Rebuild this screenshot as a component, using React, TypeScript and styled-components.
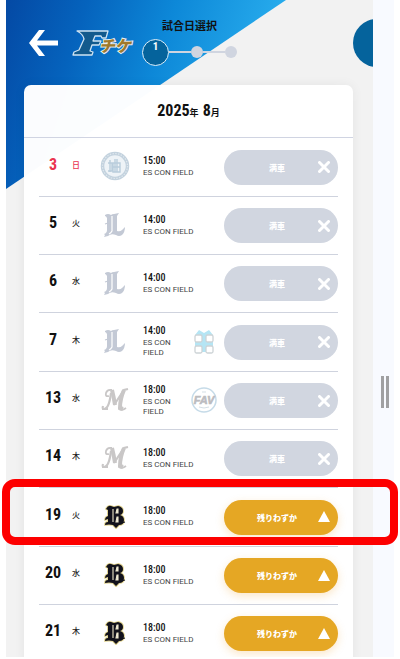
import React from 'react';
import styled, { createGlobalStyle, css } from 'styled-components';

const display = `"Roboto Condensed", "Roboto", "Noto Sans CJK JP", sans-serif`;
const sans = `"Roboto", "Noto Sans CJK JP", sans-serif`;

const GlobalStyle = createGlobalStyle`
  *, *::before, *::after { box-sizing: border-box; }
  body { margin: 0; background: #fff; color: #111; font-family: ${sans}; }
  button { font: inherit; border: 0; padding: 0; background: none; cursor: pointer; }
  ul, h1, h2, p, ol { margin: 0; padding: 0; list-style: none; }
`;

const Shell = styled.div`
  display: flex;
  height: calc(100vh - 2px);
  padding: 0 6px;
  overflow: hidden;
`;

const Screen = styled.div`
  position: relative;
  z-index: 1;
  flex: 1;
  min-width: 0;
  background: #f2f2f2;

  &::before {
    content: '';
    position: absolute;
    inset: 0 auto auto 0;
    width: 280px;
    height: 189px;
    background: linear-gradient(108deg, #0449a4 0%, #0563bd 24%, #0d88d8 50%, #2cb2f0 88%);
    clip-path: polygon(0 0, 100% 0, 0 100%);
  }
`;

const SideRail = styled.div`
  display: flex;
  align-items: center;
  justify-content: center;
  width: 21px;
  padding: 127px 0 0 2px;
  background: #f8faff;
`;

const Grip = styled.div`
  width: 8px;
  height: 32px;
  border: solid #a0a0a2;
  border-width: 0 3px;
`;

const Header = styled.header`
  position: relative;
  display: flex;
  align-items: center;
  height: 85px;
  padding-left: 23px;
  overflow: hidden;
`;

const BackButton = styled.button`
  display: flex;
  width: 29px;
  margin-right: 14px;
`;

const Progress = styled.div`
  display: flex;
  flex-direction: column;
  align-items: center;
  gap: 5px;
  margin-left: 5px;
`;

const StepTitle = styled.h1`
  font-size: 11px;
  line-height: 14px;
  font-weight: 700;
`;

const Steps = styled.ol`
  display: flex;
  align-items: center;
`;

const Step = styled.li<{ $current?: boolean }>`
  display: flex;
  align-items: center;
  justify-content: center;
  width: 12px;
  height: 12px;
  border-radius: 50%;
  background: #d0d5e0;

  ${({ $current }) =>
    $current &&
    css`
      width: 27px;
      height: 27px;
      padding-bottom: 10px;
      border: 1px solid #dceefa;
      background: #05639c;
      color: #fff;
      font: 700 11px/14px ${display};
    `}
`;

const StepLine = styled.li`
  width: 22px;
  height: 2px;
  background: #d0d5e0;
`;

const MenuButton = styled.button`
  flex: none;
  width: 48px;
  height: 48px;
  margin: 0 -28px 0 auto;

  && {
    border-radius: 50%;
    background: #05639c;
  }
`;

const Card = styled.main`
  position: relative;
  margin: 0 20px 0 18px;
  border-radius: 7px 7px 0 0;
  background: rgba(255, 255, 255, 0.985);
  box-shadow: 0 0 12px rgba(0, 0, 0, 0.06);
`;

const Month = styled.h2`
  display: flex;
  align-items: baseline;
  justify-content: center;
  height: 53px;
  padding-top: 14px;
  border-bottom: 1px solid #d0d4e2;
  font: 700 16px/24px ${display};
`;

const MonthUnit = styled.span`
  font-size: 9px;

  &:first-of-type { margin-right: 4px; }
`;

const GameList = styled.ul`
  padding: 0 15px;
`;

const Game = styled.li`
  position: relative;
  display: grid;
  grid-template-columns: 28px 18px 58px 1fr 114px;
  align-items: center;
  height: 58px;
  border-bottom: 1px solid #cfd3de;

  &:nth-child(3n + 1) { height: 59px; }
`;

const Day = styled.span<{ $sunday: boolean }>`
  font: 700 16px/20px ${display};
  text-align: center;
  padding-bottom: 5px;
  color: ${({ $sunday }) => ($sunday ? '#ea3350' : '#111')};
`;

const Weekday = styled.span<{ $sunday: boolean }>`
  font-size: 8px;
  line-height: 12px;
  font-weight: 500;
  text-align: center;
  padding-bottom: 3px;
  color: ${({ $sunday }) => ($sunday ? '#ea3350' : '#222')};
`;

const Emblem = styled.span`
  display: flex;
  justify-content: center;
  padding: 0 0 2px 2px;
`;

const Info = styled.div`
  display: flex;
  align-items: center;
  padding: 0 7px 2px 0;
`;

const Place = styled.p`
  flex: 1;
  font-size: 8px;
  line-height: 10px;
  color: #444;
`;

const Time = styled.time`
  display: block;
  font: 500 10px/14px ${display};
  color: #111;
`;

const Status = styled.button<{ $low: boolean }>`
  && {
    display: flex;
    align-items: center;
    height: 35px;
    padding: 0 8px 0 12px;
    border-radius: 18px;
    background: ${({ $low }) => ($low ? '#e5a724' : '#d1d6e0')};
    box-shadow: ${({ $low }) => ($low ? '0 3px 8px rgba(240, 160, 40, 0.25)' : 'none')};
    color: #fff;
    font-size: 8px;
    font-weight: 900;
  }
`;

const StatusLabel = styled.span`
  flex: 1;
  text-align: center;
`;

const Highlight = styled.span`
  position: absolute;
  inset: -9px -60px 1px -37px;
  border: 8px solid #fd0000;
  border-radius: 13px;
  pointer-events: none;
  z-index: 2;
`;

const ArrowLeft = () => (
  <svg width="29" height="28" viewBox="0 0 29 28" aria-hidden="true">
    <path d="M10 1h6L8 11.500h21v5H8L16 27h-6L0 14z" fill="#fff" />
  </svg>
);

const Logo = () => (
  <svg width="65" height="28" viewBox="0 0 65 28" role="img" aria-label="Fチケ">
    <path
      d="M5 2h31l-2 7h-4l-1-2h-6l-2 5h8l-2 4h-7l-2 6 3 1-1 3H1l1-3 5-2 5-11q-1-5-7-8z"
      fill="#135a8d"
      stroke="#cfe3f2"
      strokeWidth="1.300"
      strokeLinejoin="round"
    />
    <g transform="skewX(-12)">
      <text
        x="32"
        y="23"
        fontFamily="Noto Sans CJK JP, sans-serif"
        fontSize="16"
        fontWeight="900"
        fill="#a07a2c"
        stroke="#e9eef0"
        strokeWidth="2"
        paintOrder="stroke"
      >
        チケ
      </text>
    </g>
  </svg>
);

const SealMark = () => (
  <svg width="30" height="30" viewBox="0 0 30 30" aria-hidden="true">
    <circle cx="15" cy="15" r="12.500" fill="#eef3f7" stroke="#c3d2de" strokeWidth="3.500" />
    <circle cx="15" cy="15" r="12.500" fill="none" stroke="#e0e8ee" strokeWidth="1.200" strokeDasharray="1.4 1.4" />
    <path
      d="M10 9v12M8 12h4v8H8M15 8v13M13 12h7v9h-7zM13 16h7M17 8v13"
      fill="none"
      stroke="#b9cddc"
      strokeWidth="1.400"
    />
  </svg>
);

const LMark = () => (
  <svg width="22" height="26" viewBox="0 0 22 26" aria-hidden="true">
    <path
      d="M1 3q3-2 6 0 1-1 3-1l5-1-2 3v15q3 1 5-1l3-3q0 5-3 8-3 2-6 0-5-2-8 1l-4 1 1-2-1-1q3-1 3-4V6q-1-2-2-2z"
      fill="#c3c9d5"
    />
    <path d="M8 4v15q-1 2-3 3" stroke="#fff" strokeWidth="1.200" fill="none" />
    <path d="M1 12l3-1" stroke="#c3c9d5" strokeWidth="1.200" />
  </svg>
);

const MMark = () => (
  <svg width="28" height="26" viewBox="0 0 28 26" fill="none" stroke="#c9c7c7" aria-hidden="true">
    <path d="M11 3q2 8 3 15M23 3q-4 9-4 18l3 1" strokeWidth="4" />
    <path d="M10 6Q8 22 3 22q-2 0-1-3M13 18 23 3l4-1" strokeWidth="2.200" />
    <path d="M11 3q-5-1-6 3t3 3M1 22h6M18 22q3 2 7-1" strokeWidth="1.800" />
  </svg>
);

const BMark = () => (
  <svg width="22" height="25" viewBox="0 0 22 25" aria-hidden="true">
    <path
      d="M2 5q2-4 5-3l3 1 4-1q5 1 5 5 0 3-3 4 4 1 4 5 0 5-5 5l-3 3-3-3q-4-1-8 0 0-3 3-3v-3l-3 1q0-3 3-4V6z"
      fill="#12121c"
      stroke="#e0d28c"
      strokeWidth="1.800"
      strokeLinejoin="round"
      paintOrder="stroke"
    />
    <path d="M9 5v13M13 5h1v4h-2zM13 13h1v5h-2z" fill="#eee" stroke="#eee8cc" strokeWidth="1.100" />
    <path d="M4 10l4-1M17 19l4-1" stroke="#12121c" strokeWidth="1.200" />
  </svg>
);

const GiftMark = () => (
  <svg width="26" height="26" viewBox="0 0 26 26" aria-hidden="true">
    <path d="M4 7l4-5 5 3 5-3 4 5v17H4z" fill="#b5e5f4" />
    <g fill="#fff" stroke="#cdd3d6" strokeWidth="1.300">
      <rect x="4" y="7" width="7" height="7" rx="1.500" />
      <rect x="15" y="7" width="7" height="7" rx="1.500" />
      <rect x="4" y="18" width="7" height="7" rx="1.500" />
      <rect x="15" y="18" width="7" height="7" rx="1.500" />
    </g>
  </svg>
);

const FavMark = () => (
  <svg width="26" height="26" viewBox="0 0 26 26" role="img" aria-label="FAV">
    <circle cx="13" cy="13" r="12" fill="#fff" stroke="#c6dbe8" strokeWidth="1.500" />
    <path d="M8 20q5 2 10 0M11 5h4" stroke="#d5dfe5" fill="none" />
    <text
      x="13"
      y="17"
      textAnchor="middle"
      fontFamily="Liberation Sans, sans-serif"
      fontSize="11"
      fontWeight="700"
      fontStyle="italic"
      fill="#bcbcc0"
      stroke="#bcbcc0"
      strokeWidth="0.600"
    >
      FAV
    </text>
  </svg>
);

const Cross = () => (
  <svg width="12" height="12" viewBox="0 0 12 12" aria-hidden="true">
    <path d="m1.500 1.500 9 9m0-9-9 9" stroke="#fff" strokeWidth="3" strokeLinecap="round" />
  </svg>
);

const Triangle = () => (
  <svg width="12" height="12" viewBox="0 0 12 12" aria-hidden="true">
    <path d="M6 0l6 11H0z" fill="#fff" />
  </svg>
);

const emblems = { seal: SealMark, lions: LMark, marines: MMark, buffaloes: BMark };
const promos = { gift: GiftMark, fav: FavMark };

interface GameData {
  day: number;
  weekday: string;
  team: keyof typeof emblems;
  time: string;
  promo?: keyof typeof promos;
  low?: boolean;
  highlighted?: boolean;
}

const games: GameData[] = [
  { day: 3, weekday: '日', team: 'seal', time: '15:00' },
  { day: 5, weekday: '火', team: 'lions', time: '14:00' },
  { day: 6, weekday: '水', team: 'lions', time: '14:00' },
  { day: 7, weekday: '木', team: 'lions', time: '14:00', promo: 'gift' },
  { day: 13, weekday: '水', team: 'marines', time: '18:00', promo: 'fav' },
  { day: 14, weekday: '木', team: 'marines', time: '18:00' },
  { day: 19, weekday: '火', team: 'buffaloes', time: '18:00', low: true, highlighted: true },
  { day: 20, weekday: '水', team: 'buffaloes', time: '18:00', low: true },
  { day: 21, weekday: '木', team: 'buffaloes', time: '18:00', low: true },
];

const GameRow = ({ game }: { game: GameData }) => {
  const TeamMark = emblems[game.team];
  const PromoMark = game.promo && promos[game.promo];
  const sunday = game.weekday === '日';
  return (
    <Game>
      <Day $sunday={sunday}>{game.day}</Day>
      <Weekday $sunday={sunday}>{game.weekday}</Weekday>
      <Emblem>
        <TeamMark />
      </Emblem>
      <Info>
        <Place>
          <Time>{game.time}</Time>
          ES CON FIELD
        </Place>
        {PromoMark && <PromoMark />}
      </Info>
      <Status $low={!!game.low} disabled={!game.low}>
        <StatusLabel>{game.low ? '残りわずか' : '満車'}</StatusLabel>
        {game.low ? <Triangle /> : <Cross />}
      </Status>
      {game.highlighted && <Highlight />}
    </Game>
  );
};

export default function App() {
  return (
    <>
      <GlobalStyle />
      <Shell>
        <Screen>
          <Header>
            <BackButton aria-label="戻る">
              <ArrowLeft />
            </BackButton>
            <Logo />
            <Progress>
              <StepTitle>試合日選択</StepTitle>
              <Steps>
                <Step $current>1</Step>
                <StepLine />
                <Step />
                <StepLine />
                <Step />
              </Steps>
            </Progress>
            <MenuButton aria-label="メニュー" />
          </Header>
          <Card>
            <Month>
              2025<MonthUnit>年</MonthUnit>8<MonthUnit>月</MonthUnit>
            </Month>
            <GameList>
              {games.map((game) => (
                <GameRow key={game.day} game={game} />
              ))}
            </GameList>
          </Card>
        </Screen>
        <SideRail>
          <Grip />
        </SideRail>
      </Shell>
    </>
  );
}
